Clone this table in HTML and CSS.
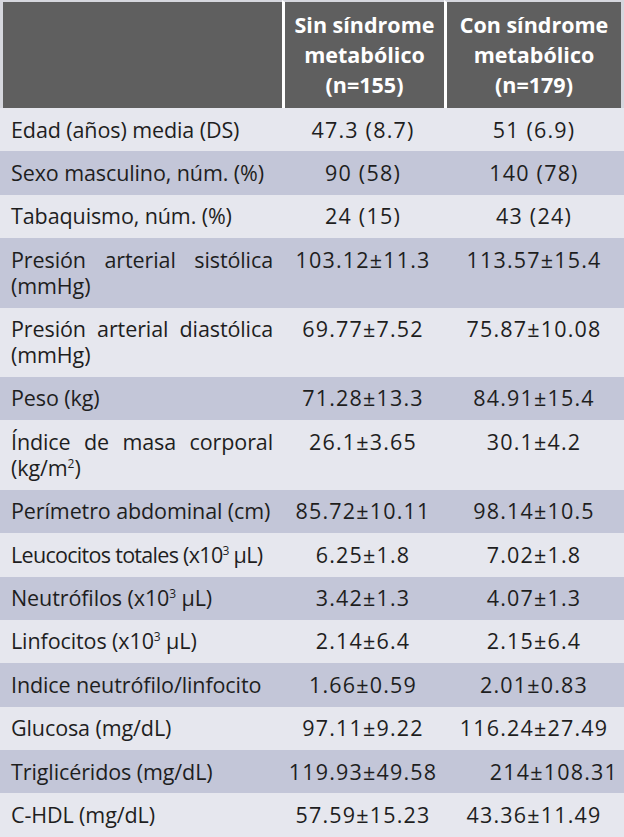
FILE: index.html
```html
<!DOCTYPE html>
<html lang="es">
<head>
<meta charset="utf-8">
<title>Tabla</title>
<link rel="stylesheet" href="styles.css">
</head>
<body>
<table class="data">
  <colgroup>
    <col class="c1">
    <col class="c2">
    <col class="c3">
  </colgroup>
  <thead>
    <tr>
      <th class="h h1"></th>
      <th class="h h2">Sin síndrome<br>metabólico<br>(n=155)</th>
      <th class="h h3">Con síndrome<br>metabólico<br>(n=179)</th>
    </tr>
  </thead>
  <tbody>
    <tr class="light"><td class="lab">Edad (años) media (DS)</td><td class="val">47.3 (8.7)</td><td class="val">51 (6.9)</td></tr>
    <tr class="dark"><td class="lab">Sexo masculino, núm. (%)</td><td class="val">90 (58)</td><td class="val">140 (78)</td></tr>
    <tr class="light"><td class="lab">Tabaquismo, núm. (%)</td><td class="val">24 (15)</td><td class="val">43 (24)</td></tr>
    <tr class="dark"><td class="lab just">Presión arterial sistólica (mmHg)</td><td class="val">103.12±11.3</td><td class="val">113.57±15.4</td></tr>
    <tr class="light"><td class="lab just">Presión arterial diastólica (mmHg)</td><td class="val">69.77±7.52</td><td class="val">75.87±10.08</td></tr>
    <tr class="dark"><td class="lab">Peso (kg)</td><td class="val">71.28±13.3</td><td class="val">84.91±15.4</td></tr>
    <tr class="light"><td class="lab just">Índice de masa corporal (kg/m<sup>2</sup>)</td><td class="val">26.1±3.65</td><td class="val">30.1±4.2</td></tr>
    <tr class="dark"><td class="lab">Perímetro abdominal (cm)</td><td class="val">85.72±10.11</td><td class="val">98.14±10.5</td></tr>
    <tr class="light"><td class="lab tight">Leucocitos totales (x10<sup>3</sup> µL)</td><td class="val">6.25±1.8</td><td class="val">7.02±1.8</td></tr>
    <tr class="dark"><td class="lab">Neutrófilos (x10<sup>3</sup> µL)</td><td class="val">3.42±1.3</td><td class="val">4.07±1.3</td></tr>
    <tr class="light"><td class="lab">Linfocitos (x10<sup>3</sup> µL)</td><td class="val">2.14±6.4</td><td class="val">2.15±6.4</td></tr>
    <tr class="dark"><td class="lab">Indice neutrófilo/linfocito</td><td class="val">1.66±0.59</td><td class="val">2.01±0.83</td></tr>
    <tr class="light"><td class="lab">Glucosa (mg/dL)</td><td class="val">97.11±9.22</td><td class="val">116.24±27.49</td></tr>
    <tr class="dark"><td class="lab">Triglicéridos (mg/dL)</td><td class="val">119.93±49.58</td><td class="val shift">214±108.31</td></tr>
    <tr class="light"><td class="lab">C-HDL (mg/dL)</td><td class="val">57.59±15.23</td><td class="val">43.36±11.49</td></tr>
  </tbody>
</table>
</body>
</html>
```
FILE: styles.css
```css
html, body {
  margin: 0;
  padding: 0;
  background: #e6e7ee;
}

.data {
  width: 624px;
  table-layout: fixed;
  border-collapse: separate;
  border-spacing: 0;
  font-family: "Open Sans", "Liberation Sans", sans-serif;
  font-size: 21.5px;
  color: #1e1e1e;
}

.c1 { width: 282px; }
.c2 { width: 162px; }
.c3 { width: 180px; }

.h {
  background: #5f5f5f;
  color: #ffffff;
  font-weight: 700;
  line-height: 30px;
  padding: 8px 0 8px 0;
  text-align: center;
  vertical-align: middle;
  border-top: 2px solid #d6d7de;
  height: 90px;
}

.h1 { border-left: 3px solid #d6d7de; }
.h2 { border-left: 3px solid #ffffff; }
.h3 { border-left: 3px solid #ffffff; border-right: 3px solid #d6d7de; }

.data td {
  line-height: 26px;
  padding: 8.5px 0 8.9px 0;
  vertical-align: top;
}

.light td { background: #e6e7ee; }
.dark td { background: #c3c6d8; }

.lab {
  padding-left: 11px !important;
  padding-right: 9px !important;
  text-align: left;
  letter-spacing: -0.1px;
}

.just {
  text-align: justify;
}

.tight {
  white-space: nowrap;
  letter-spacing: -0.7px;
}

.val {
  text-align: center;
  letter-spacing: 1.2px;
}

.shift {
  text-align: right;
  padding-right: 6px !important;
}

sup {
  font-size: 12px;
  line-height: 0;
  vertical-align: 8px;
}
```
